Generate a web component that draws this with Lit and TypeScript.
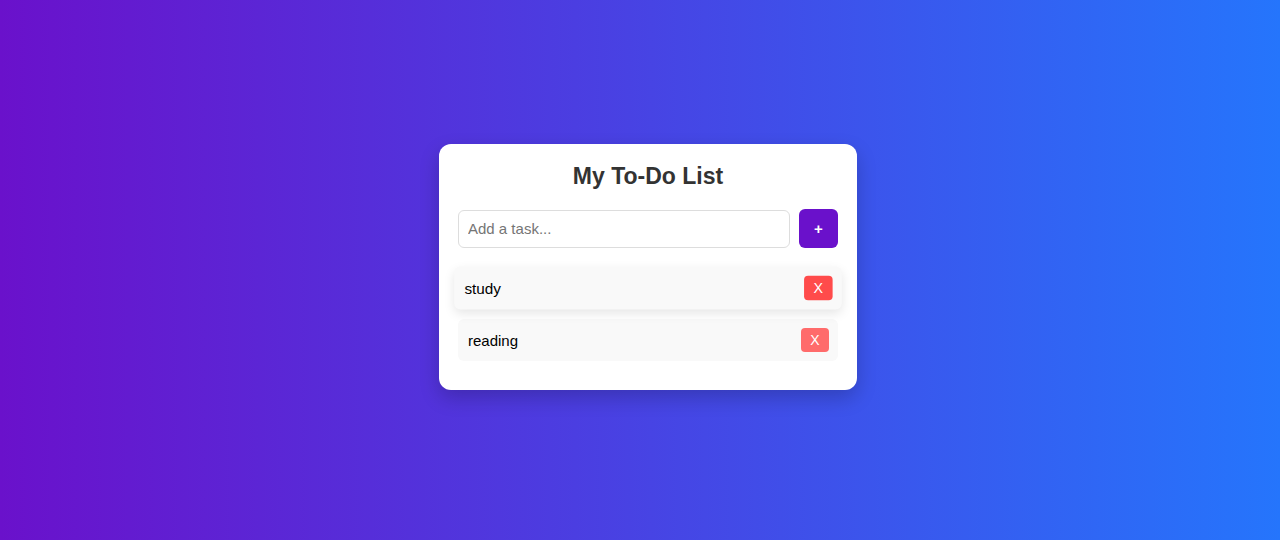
import { LitElement, html, css } from "lit";
import { customElement, state } from "lit/decorators.js";
import { classMap } from "lit/directives/class-map.js";

interface Task {
  text: string;
  active: boolean;
}

@customElement("app-root")
export class AppRoot extends LitElement {
  static styles = css`
    :host {
      display: flex;
      justify-content: center;
      align-items: center;
      box-sizing: border-box;
      min-height: 100vh;
      padding: 0 0 6px 16px;
      background: linear-gradient(to right, #6a11cb, #2575fc);
      font-family: "Liberation Sans", Arial, sans-serif;
      font-size: 15px;
      color: #000;
    }
    .card {
      box-sizing: border-box;
      width: 100%;
      max-width: 418px;
      padding: 19px;
      border-radius: 12px;
      background: #fff;
      box-shadow: 0 8px 20px rgba(0, 0, 0, 0.2);
    }
    .title {
      margin: 0 0 19px;
      font-size: 23px;
      line-height: 27px;
      text-align: center;
      color: #333;
    }
    .entry {
      display: flex;
      align-items: center;
      gap: 9px;
      margin-bottom: 19px;
    }
    .field {
      flex: 1;
      min-width: 0;
      box-sizing: border-box;
      height: 38px;
      padding: 0 9px;
      border: 1px solid #ddd;
      border-radius: 6px;
      outline: none;
      background: #fff;
      font: inherit;
    }
    .field::placeholder {
      color: #757575;
    }
    .add {
      width: 39px;
      height: 39px;
      padding: 0;
      border: none;
      border-radius: 6px;
      background: #6a11cb;
      color: #fff;
      font: bold 15px "Liberation Sans", Arial, sans-serif;
      cursor: pointer;
    }
    .list {
      margin: 0;
      padding: 0;
      list-style: none;
    }
    .item {
      display: flex;
      justify-content: space-between;
      align-items: center;
      box-sizing: border-box;
      min-height: 42px;
      margin-bottom: 10px;
      padding: 9px 9px 9px 10px;
      border-radius: 6px;
      background: #f9f9f9;
    }
    .item.active {
      transform: scale(1.02);
      box-shadow: 0 4px 10px rgba(0, 0, 0, 0.1);
    }
    .remove {
      width: 28px;
      height: 24px;
      padding: 0;
      border: none;
      border-radius: 4px;
      background: #ff6b6b;
      color: #fff;
      font: 14px "Liberation Sans", Arial, sans-serif;
      cursor: pointer;
    }
    .active .remove {
      background: #ff4b4b;
    }
  `;

  @state() private tasks: Task[] = [
    { text: "study", active: true },
    { text: "reading", active: false },
  ];

  private add(event: Event) {
    event.preventDefault();
    const field = this.renderRoot.querySelector<HTMLInputElement>(".field")!;
    const text = field.value.trim();
    if (!text) return;
    this.tasks = [...this.tasks, { text, active: false }];
    field.value = "";
  }

  private remove(task: Task) {
    this.tasks = this.tasks.filter((other) => other !== task);
  }

  render() {
    return html`
      <main class="card">
        <h1 class="title">My To-Do List</h1>
        <form class="entry" @submit=${this.add}>
          <input class="field" type="text" placeholder="Add a task..." aria-label="Add a task" />
          <button class="add" type="submit">+</button>
        </form>
        <ul class="list">
          ${this.tasks.map(
            (task) => html`
              <li class=${classMap({ item: true, active: task.active })}>
                <span>${task.text}</span>
                <button class="remove" type="button" @click=${() => this.remove(task)}>X</button>
              </li>
            `
          )}
        </ul>
      </main>
    `;
  }
}
